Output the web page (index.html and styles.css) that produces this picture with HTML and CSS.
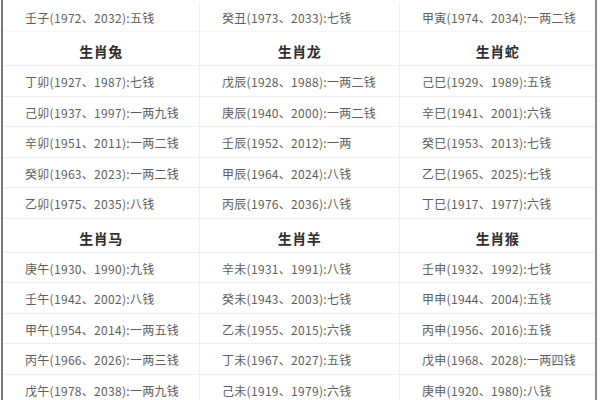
FILE: index.html
```html
<!DOCTYPE html>
<html lang="zh">
<head>
<meta charset="utf-8">
<link rel="stylesheet" href="styles.css">
</head>
<body>
<div class="sheet">
  <div class="row first">
    <div class="cell">壬子(1972、2032):五钱</div>
    <div class="cell">癸丑(1973、2033):七钱</div>
    <div class="cell">甲寅(1974、2034):一两二钱</div>
  </div>
  <div class="row head">
    <div class="cell">生肖兔</div>
    <div class="cell">生肖龙</div>
    <div class="cell">生肖蛇</div>
  </div>
  <div class="row">
    <div class="cell">丁卯(1927、1987):七钱</div>
    <div class="cell">戊辰(1928、1988):一两二钱</div>
    <div class="cell">己巳(1929、1989):五钱</div>
  </div>
  <div class="row">
    <div class="cell">己卯(1937、1997):一两九钱</div>
    <div class="cell">庚辰(1940、2000):一两二钱</div>
    <div class="cell">辛巳(1941、2001):六钱</div>
  </div>
  <div class="row">
    <div class="cell">辛卯(1951、2011):一两二钱</div>
    <div class="cell">壬辰(1952、2012):一两</div>
    <div class="cell">癸巳(1953、2013):七钱</div>
  </div>
  <div class="row">
    <div class="cell">癸卯(1963、2023):一两二钱</div>
    <div class="cell">甲辰(1964、2024):八钱</div>
    <div class="cell">乙巳(1965、2025):七钱</div>
  </div>
  <div class="row">
    <div class="cell">乙卯(1975、2035):八钱</div>
    <div class="cell">丙辰(1976、2036):八钱</div>
    <div class="cell">丁巳(1917、1977):六钱</div>
  </div>
  <div class="row head">
    <div class="cell">生肖马</div>
    <div class="cell">生肖羊</div>
    <div class="cell">生肖猴</div>
  </div>
  <div class="row">
    <div class="cell">庚午(1930、1990):九钱</div>
    <div class="cell">辛未(1931、1991):八钱</div>
    <div class="cell">壬申(1932、1992):七钱</div>
  </div>
  <div class="row">
    <div class="cell">壬午(1942、2002):八钱</div>
    <div class="cell">癸未(1943、2003):七钱</div>
    <div class="cell">甲申(1944、2004):五钱</div>
  </div>
  <div class="row">
    <div class="cell">甲午(1954、2014):一两五钱</div>
    <div class="cell">乙未(1955、2015):六钱</div>
    <div class="cell">丙申(1956、2016):五钱</div>
  </div>
  <div class="row">
    <div class="cell">丙午(1966、2026):一两三钱</div>
    <div class="cell">丁未(1967、2027):五钱</div>
    <div class="cell">戊申(1968、2028):一两四钱</div>
  </div>
  <div class="row">
    <div class="cell">戊午(1978、2038):一两九钱</div>
    <div class="cell">己未(1919、1979):六钱</div>
    <div class="cell">庚申(1920、1980):八钱</div>
  </div>
</div>
</body>
</html>
```
FILE: styles.css
```css
html, body {
  margin: 0;
  padding: 0;
  background: #fff;
  overflow: hidden;
}
.sheet {
  margin-left: 1px;
  width: 592px;
  height: 400px;
  border-left: 2px solid #7a7a7a;
  border-right: 2px solid #8a8a8a;
  font-family: "Noto Sans CJK SC", "Noto Sans", sans-serif;
  color: #5e5e5e;
  font-size: 12px;
}
.row {
  display: grid;
  grid-template-columns: 197px 200px 195px;
  height: 30.5px;
  border-bottom: 1px solid #eeeeee;
  box-sizing: border-box;
}
.row.first {
  height: 32px;
  padding-top: 2px;
  border-bottom-color: #f6f6f6;
}
.row.head {
  height: 34px;
}
.cell {
  display: flex;
  align-items: center;
  padding-left: 22px;
  padding-top: 2px;
  border-right: 1px solid #efefef;
  white-space: nowrap;
  letter-spacing: 0.3px;
}
.cell:last-child {
  border-right: none;
}
.head .cell {
  justify-content: center;
  padding-left: 0;
  padding-top: 5px;
  font-size: 14px;
  font-weight: bold;
  color: #2e2e2e;
  letter-spacing: 0.5px;
}
```
